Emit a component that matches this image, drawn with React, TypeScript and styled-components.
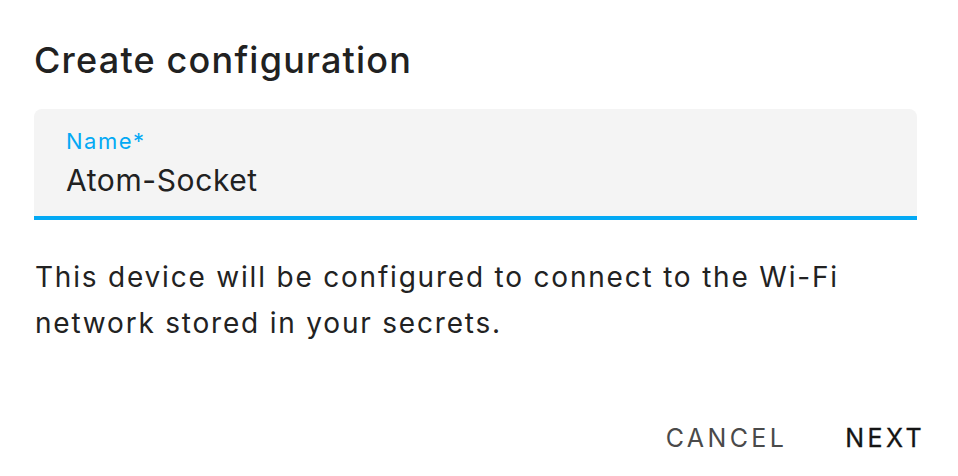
import React from 'react'
import styled, { createGlobalStyle } from 'styled-components'

const GlobalStyle = createGlobalStyle`
  html, body {
    margin: 0;
    padding: 0;
    background: #ffffff;
  }
  body {
    font-family: Inter, "Noto Sans", sans-serif;
    -webkit-font-smoothing: antialiased;
  }
`

const Dialog = styled.div`
  width: 958px;
  height: 476px;
  box-sizing: border-box;
  padding: 36px 41px 0 34px;
  display: flex;
  flex-direction: column;
`

const Title = styled.h2`
  margin: 0;
  font-size: 36px;
  font-weight: 500;
  line-height: 48px;
  color: #212121;
  letter-spacing: 1.2px;
`

const Field = styled.div`
  margin-top: 25px;
  height: 111px;
  box-sizing: border-box;
  background: #f4f4f4;
  border-radius: 8px 8px 0 0;
  border-bottom: 4px solid #03a9f4;
  padding: 19px 32px 0 32px;
  display: flex;
  flex-direction: column;
`

const Label = styled.label`
  font-size: 22px;
  line-height: 26px;
  color: #03a9f4;
  letter-spacing: 1.5px;
`

const Value = styled.div`
  margin-top: 7px;
  font-size: 30px;
  line-height: 38px;
  color: #212121;
  letter-spacing: 0.6px;
`

const Body = styled.p`
  margin: 34px 0 0 1px;
  font-size: 28px;
  font-weight: 400;
  line-height: 46px;
  color: #222222;
  letter-spacing: 1.8px;
  max-width: 830px;
`

const Actions = styled.div`
  margin-top: auto;
  margin-right: -8px;
  padding-bottom: 23px;
  display: flex;
  justify-content: flex-end;
  gap: 58px;
`

const Button = styled.button<{ $primary?: boolean }>`
  border: none;
  background: none;
  padding: 0;
  font-family: inherit;
  font-size: 25px;
  font-weight: 400;
  letter-spacing: 3.4px;
  text-transform: uppercase;
  color: ${(p) => (p.$primary ? '#141414' : '#4a4a4a')};
  -webkit-text-stroke: ${(p) => (p.$primary ? '0.3px #141414' : '0')};
  cursor: pointer;
`

export default function App() {
  return (
    <>
      <GlobalStyle />
      <Dialog>
        <Title>Create configuration</Title>
        <Field>
          <Label>Name*</Label>
          <Value>Atom-Socket</Value>
        </Field>
        <Body>
          This device will be configured to connect to the Wi-Fi network stored in your secrets.
        </Body>
        <Actions>
          <Button>Cancel</Button>
          <Button $primary>Next</Button>
        </Actions>
      </Dialog>
    </>
  )
}
